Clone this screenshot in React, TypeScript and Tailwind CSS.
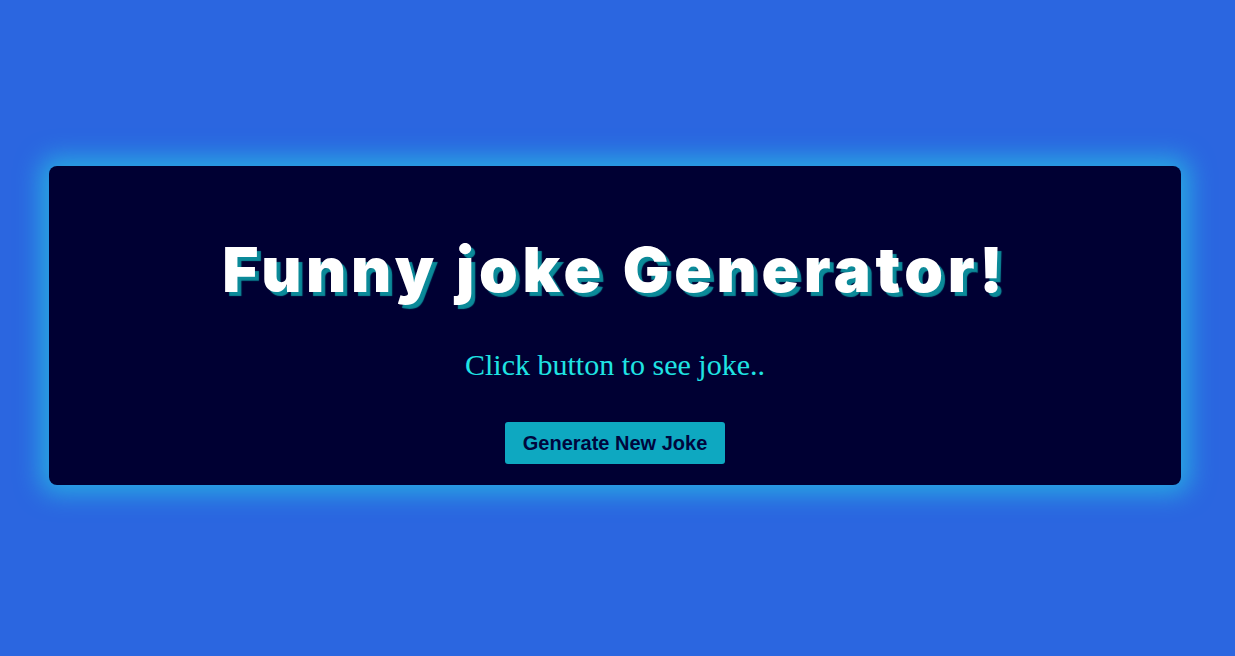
export default function App() {
  return (
    <div className="min-h-[656px] w-full bg-[#2b66e0] pt-[166px] pl-[49px]">
      <div className="w-[1132px] h-[319px] rounded-[8px] bg-[#000033] shadow-[0_0_24px_9px_#28a8e2] flex flex-col items-center">
        <h1 className="mt-[64px] text-[62px] leading-[80px] text-white font-black tracking-[4.7px] [text-shadow:4px_4px_1px_#0b8a99] font-['Inter','Liberation_Sans',sans-serif]">
          Funny joke Generator!
        </h1>
        <p className="mt-[37px] text-[30px] leading-[36px] text-[#1fe3e3] font-['Liberation_Serif',serif]">
          Click button to see joke..
        </p>
        <button className="mt-[39px] w-[220px] h-[42px] rounded-[3px] bg-[#0ea8c1] text-[#00063d] text-[20px] font-bold font-['Liberation_Sans',Arial,sans-serif]">
          Generate New Joke
        </button>
      </div>
    </div>
  );
}
